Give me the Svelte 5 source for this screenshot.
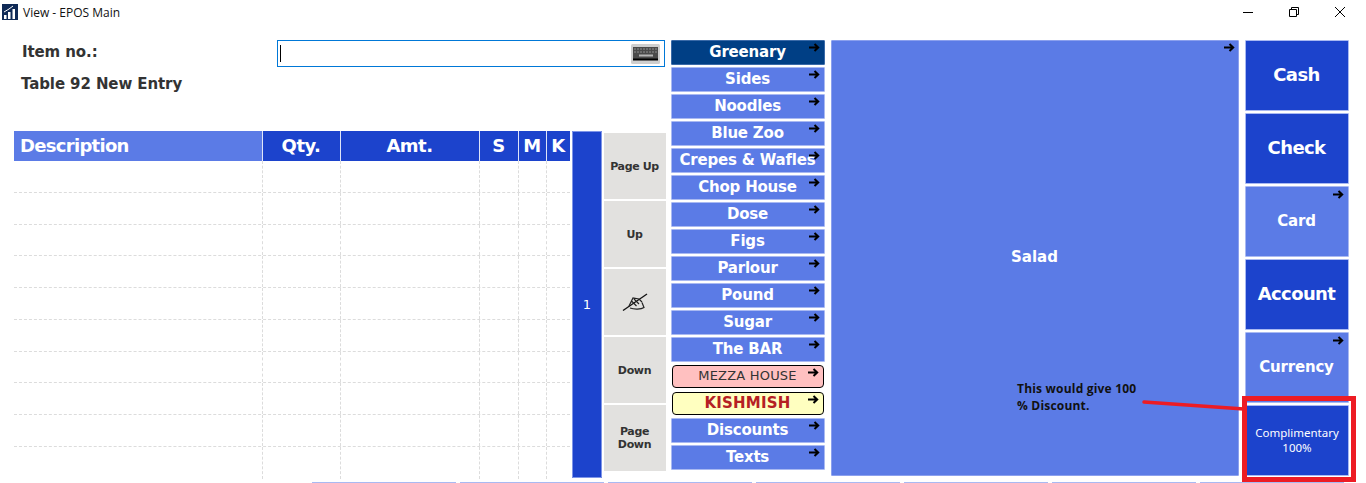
<script lang="ts">
	const rows = Array(10).fill(0);
	const cols = ['desc', 'qty', 'amt', 's', 'm', 'k'];
	const heads = [
		{ label: 'Description', cls: 'desc' },
		{ label: 'Qty.', cls: 'qty' },
		{ label: 'Amt.', cls: 'amt' },
		{ label: 'S', cls: 's' },
		{ label: 'M', cls: 'm' },
		{ label: 'K', cls: 'k' }
	];
	const nav = ['Page Up', 'Up', '', 'Down', 'Page Down'];
	const menu = [
		{ label: 'Greenary', kind: 'active' },
		{ label: 'Sides' },
		{ label: 'Noodles' },
		{ label: 'Blue Zoo' },
		{ label: 'Crepes & Wafles' },
		{ label: 'Chop House' },
		{ label: 'Dose' },
		{ label: 'Figs' },
		{ label: 'Parlour' },
		{ label: 'Pound' },
		{ label: 'Sugar' },
		{ label: 'The BAR' },
		{ label: 'MEZZA HOUSE', kind: 'pink' },
		{ label: 'KISHMISH', kind: 'yellow' },
		{ label: 'Discounts' },
		{ label: 'Texts' }
	];
	const pay = [
		{ label: 'Cash', dark: true },
		{ label: 'Check', dark: true },
		{ label: 'Card', soft: true, arrow: true },
		{ label: 'Account', dark: true },
		{ label: 'Currency', soft: true, arrow: true },
		{ label: 'Complimentary 100%', dark: true, small: true }
	];
</script>

{#snippet arrow()}
	<svg class="arrow" width="11" height="9" viewBox="0 0 11 9">
		<path d="M0 4.500H9M5.500 1l3.700 3.500L5.500 8" fill="none" stroke="#000" stroke-width="2" />
	</svg>
{/snippet}

<div class="app">
	<header class="titlebar">
		<svg class="appicon" width="16" height="16" viewBox="0 0 16 16">
			<rect width="16" height="16" fill="#0f2a56" />
			<path d="M2 15v-4h2.500v4zM6 15V8h2.500v7zM10.500 15V5H13v10z" fill="#fff" />
			<path d="M2 8l5-3 4-3" fill="none" stroke="#fff" />
		</svg>
		<span class="title">View - EPOS Main</span>
		<div class="winctl">
			<svg width="12" height="12" viewBox="0 0 12 12"><path d="M1 6.500H11" stroke="#000" /></svg>
			<svg width="12" height="12" viewBox="0 0 12 12"><path d="M1.500 3.500h7v7h-7zM3.500 3.500v-2h7v7h-2" fill="none" stroke="#000" /></svg>
			<svg width="12" height="12" viewBox="0 0 12 12"><path d="M1 1l10 10M11 1L1 11" stroke="#000" /></svg>
		</div>
	</header>

	<main class="board">
		<section class="form">
			<div class="labels">
				<div class="item-label">Item no.:</div>
				<div class="entry-label">Table 92 New Entry</div>
			</div>
			<div class="input">
				<span class="caret"></span>
				<svg class="keyboard" width="29" height="20" viewBox="0 0 29 20">
					<rect width="29" height="20" rx="1.500" fill="#cfcfcf" />
					<rect x="2" y="3" width="25" height="13" fill="#4a4a4a" />
					<path d="M3 5h23M3 8h23" stroke="#8f8f8f" stroke-dasharray="2 1" />
					<path d="M8 11.500h14" stroke="#b5b5b5" stroke-width="2" />
					<path d="M2 15.500h25" stroke="#000" stroke-width="2" />
				</svg>
			</div>
		</section>

		<section class="table">
			<div class="thead">
				{#each heads as h}
					<div class="th {h.cls}">{h.label}</div>
				{/each}
			</div>
			{#each rows as _}
				<div class="tr">
					{#each cols as c}
						<div class="td {c}"></div>
					{/each}
				</div>
			{/each}
		</section>

		<div class="pager">1</div>

		<nav class="nav">
			{#each nav as n}
				<button class="navbtn">
					{#if n}
						{n}
					{:else}
						<svg class="pen" width="26" height="18" viewBox="0 0 26 18">
							<path d="M1 17.500L25 1" fill="none" stroke="#111" stroke-width="1.300" />
							<path d="M7 13L11 5l6 1 3 3M8 15c4 1.500 11 1.500 14-.5l-2-5M9.500 8l5 5M12 6l5 5" fill="none" stroke="#222" stroke-width="1.200" />
						</svg>
					{/if}
				</button>
			{/each}
		</nav>

		<div class="menu">
			{#each menu as m}
				<button class="menubtn {m.kind ?? ''}">
					{m.label}
					{@render arrow()}
				</button>
			{/each}
		</div>

		<button class="salad">Salad{@render arrow()}</button>

		<div class="pay">
			{#each pay as p}
				<button class="paybtn" class:dark={p.dark} class:soft={p.soft} class:small={p.small}>
					{p.label}
					{#if p.arrow}{@render arrow()}{/if}
				</button>
			{/each}
		</div>

		<div class="nextrow">
			{#each Array(7) as _}
				<span></span>
			{/each}
		</div>
	</main>

	<div class="note">This would give 100<br />% Discount.</div>
	<svg class="leader" width="110" height="14" viewBox="0 0 110 14">
		<path d="M2 2L102 9" stroke="#ed1c24" stroke-width="3.500" stroke-linecap="round" />
	</svg>
	<div class="redbox"></div>
</div>

<style>
	:global(body) {
		background: #fff;
	}

	.app {
		position: relative;
		width: 1366px;
		height: 483px;
		overflow: hidden;
		background: #fff;
		font-family: 'DejaVu Sans', sans-serif;
	}

	.titlebar {
		display: flex;
		align-items: center;
		height: 24px;
		padding-left: 2px;
	}

	.appicon {
		margin-right: 5px;
	}

	.title {
		font-family: 'Open Sans', sans-serif;
		font-size: 12px;
		color: #111;
	}

	.winctl {
		display: flex;
		gap: 34px;
		margin-left: auto;
		margin-right: 20px;
	}

	.board {
		display: grid;
		grid-template-columns: 558px 30px 2px 62px 5px 155px 5px 408px 6px 104px;
		grid-template-rows: 91px 351px;
		padding: 16px 0 0 14px;
	}

	.form {
		grid-column: 1 / 5;
		display: flex;
		align-items: flex-start;
		padding-left: 7px;
	}

	.labels {
		width: 256px;
		font-weight: 700;
		color: #333;
		font-size: 15px;
		letter-spacing: -0.1px;
	}

	.item-label {
		padding: 3px 0 0 1px;
		line-height: 18px;
	}

	.entry-label {
		margin-top: 14px;
		line-height: 18px;
	}

	.input {
		display: flex;
		align-items: center;
		justify-content: space-between;
		width: 388px;
		height: 27px;
		box-sizing: border-box;
		border: 1px solid #0078d7;
		padding: 0 4px 0 2px;
	}

	.caret {
		width: 1px;
		height: 17px;
		background: #000;
	}

	.table {
		grid-column: 1;
		grid-row: 2;
		margin-right: 2px;
	}

	.thead {
		display: flex;
		height: 30px;
		background: #1c43cc;
	}

	.th {
		box-sizing: border-box;
		color: #fff;
		font-weight: 700;
		font-size: 18px;
		line-height: 29px;
		text-align: center;
		letter-spacing: -0.5px;
		padding-right: 1px;
		border-left: 1px solid #dfe5f8;
	}

	.th.desc {
		background: #5b7be6;
		border-left: 0;
		text-align: left;
		padding-left: 6px;
		letter-spacing: -0.7px;
	}

	.desc { width: 248px; }
	.qty { width: 78px; }
	.amt { width: 139px; }
	.s { width: 39px; }
	.m { width: 28px; }
	.k { width: 24px; }

	.tr {
		display: flex;
		height: 31.750px;
		box-sizing: border-box;
		border-bottom: 1px dashed #dcdcdc;
	}

	.tr:last-child {
		border-bottom: 0;
	}

	.td {
		box-sizing: border-box;
		border-left: 1px dashed #dcdcdc;
	}

	.td.desc {
		border-left: 0;
	}

	.pager {
		grid-column: 2;
		grid-row: 2;
		height: 347px;
		display: flex;
		align-items: center;
		justify-content: center;
		background: #1c43cc;
		box-shadow: inset 0 0 0 1px #7e95e8;
		border-radius: 1px;
		color: #fff;
		font-size: 13px;
	}

	.nav {
		grid-column: 4;
		grid-row: 2;
		display: flex;
		flex-direction: column;
		gap: 2px;
		padding-top: 2px;
	}

	button {
		position: relative;
		margin: 0;
		padding: 0;
		font-family: inherit;
		cursor: pointer;
	}

	.navbtn {
		height: 66px;
		border: 0;
		background: #e2e1df;
		color: #333;
		font-size: 11px;
		font-weight: 700;
		line-height: 13px;
		letter-spacing: -0.35px;
		padding: 0 3px 0 2px;
	}

	.pen {
		display: block;
		margin: 0 auto;
	}

	.menu {
		grid-column: 6;
		grid-row: 1 / 3;
		display: flex;
		flex-direction: column;
		gap: 2px;
		width: 154px;
	}

	.menubtn {
		height: 25px;
		border: 1px solid #a9b9f2;
		border-radius: 1px;
		background: #5b7be6;
		color: #fff;
		font-size: 15px;
		font-weight: 700;
		line-height: 20px;
		letter-spacing: -0.2px;
		white-space: nowrap;
		padding: 0 1px 2px 0;
	}

	.menubtn.active {
		background: #003f85;
		border-color: #3a6aa8;
	}

	.menubtn.pink,
	.menubtn.yellow {
		height: 23px;
		margin: 1px;
		border: 1px solid #000;
		border-radius: 4px;
		padding: 0 1px 1px 0;
		letter-spacing: 0.2px;
	}

	.menubtn.pink {
		background: #ffc0c0;
		color: #333;
		font-size: 13px;
		font-weight: 400;
	}

	.menubtn.yellow {
		background: #ffffc0;
		color: #b52024;
	}

	.arrow {
		position: absolute;
		top: 2px;
		right: 4px;
	}

	.salad {
		grid-column: 8;
		grid-row: 1 / 3;
		height: 436px;
		border: 1px solid #8ba0ee;
		border-radius: 1px;
		background: #5b7be6;
		color: #fff;
		font-size: 15px;
		font-weight: 700;
		padding: 0 1px 2px 0;
	}

	.salad .arrow {
		right: 3px;
	}

	.pay {
		grid-column: 10;
		grid-row: 1 / 3;
		display: flex;
		flex-direction: column;
		gap: 2px;
	}

	.paybtn {
		height: 71px;
		border: 1px solid #a9b9f2;
		border-radius: 1px;
		background: #5b7be6;
		color: #fff;
		font-size: 18px;
		font-weight: 700;
		letter-spacing: -0.6px;
		padding: 0 1px 2px 0;
	}

	.paybtn.dark {
		background: #1c43cc;
	}

	.paybtn.soft {
		font-size: 15px;
		letter-spacing: -0.2px;
	}

	.paybtn.small {
		font-family: 'Noto Sans', sans-serif;
		font-size: 11.500px;
		font-weight: 400;
		line-height: 15px;
		letter-spacing: 0;
		padding: 0 8px 2px;
	}

	.paybtn .arrow {
		top: 3px;
		right: 4px;
	}

	.nextrow {
		grid-column: 1 / -1;
		display: flex;
		gap: 4px;
		margin-left: 298px;
	}

	.nextrow span {
		width: 144px;
		height: 2px;
		background: #a9b9f2;
	}

	.note {
		position: absolute;
		left: 1017px;
		top: 380px;
		font-family: 'Open Sans', sans-serif;
		font-size: 12px;
		font-weight: 700;
		line-height: 17px;
		letter-spacing: 0.2px;
		color: #111;
	}

	.leader {
		position: absolute;
		left: 1142px;
		top: 400px;
	}

	.redbox {
		position: absolute;
		left: 1242px;
		top: 396px;
		width: 114px;
		height: 86px;
		box-sizing: border-box;
		border: 5px solid #ed1c24;
	}
</style>
